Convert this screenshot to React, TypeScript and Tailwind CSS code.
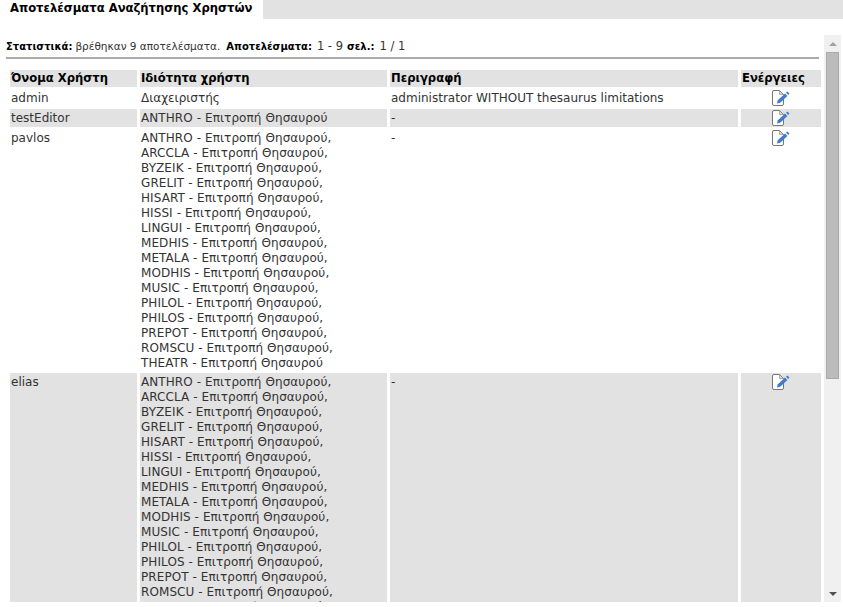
const committee = (code: string) => `${code} - Επιτροπή Θησαυρού`;

const codes = [
  "ANTHRO",
  "ARCCLA",
  "BYZEIK",
  "GRELIT",
  "HISART",
  "HISSI",
  "LINGUI",
  "MEDHIS",
  "METALA",
  "MODHIS",
  "MUSIC",
  "PHILOL",
  "PHILOS",
  "PREPOT",
  "ROMSCU",
  "THEATR",
];

const users = [
  { name: "admin", roles: ["Διαχειριστής"], description: "administrator WITHOUT thesaurus limitations" },
  { name: "testEditor", roles: [committee("ANTHRO")], description: "-" },
  { name: "pavlos", roles: codes.map(committee), description: "-" },
  { name: "elias", roles: codes.map(committee), description: "-" },
];

const EditIcon = () => (
  <svg width="18" height="16" viewBox="0 0 18 16" className="mx-auto block">
    <path
      d="M11.5 9 V14 a1.5 1.5 0 0 1-1.5 1.5 H2 a1.5 1.5 0 0 1-1.5-1.5 V2 A1.5 1.5 0 0 1 2 0.5 H7.5 L11.5 4.5 V5"
      fill="#fff"
      stroke="#777"
    />
    <path d="M7.5 1 V4.5 H11" fill="#d8d8d8" stroke="#aaa" />
    <path d="M5 13.5 L5.6 10.4 L13 3.6 L15.4 6 L8.2 12.8 Z" fill="#3f7cc9" />
    <path d="M14 2.7 L15.5 1.6 L17.4 3.5 L16.2 5 Z" fill="#3f7cc9" />
  </svg>
);

const App = () => {
  return (
    <div className="h-[607px] w-[843px] overflow-hidden bg-white font-['DejaVu_Sans',Verdana,sans-serif] text-[12px] leading-[15px] text-[#333]">
      <div className="flex h-[19px] bg-[#e2e2e2]">
        <div className="w-[263px] bg-white pl-[10px] text-[11.6px] font-bold leading-[17px] text-black">
          Αποτελέσματα Αναζήτησης Χρηστών
        </div>
      </div>

      <div className="flex h-[583px] pt-[16px]">
        <div className="w-[824px] overflow-hidden pl-[6px]">
          <div className="flex h-[19px] items-end whitespace-pre text-[10.5px] leading-[15px]">
            <b className="text-[10px] text-black">Στατιστικά:</b>
            <span className="ml-[3px]">βρέθηκαν 9 αποτελέσματα.</span>
            <b className="ml-[6px] text-[10px] text-black">Αποτελέσματα:</b>
            <span className="ml-[5px] text-[11.5px]">1 - 9</span>
            <b className="ml-[4px] text-[10px] text-black">σελ.:</b>
            <span className="ml-[5px] text-[11.5px]">1 / 1</span>
          </div>
          <div className="mt-[3px] h-[2px] w-[813px] bg-[#aaa]" />

          <table className="mt-[9px] ml-[1px] table-fixed border-separate border-spacing-x-[3px] border-spacing-y-[2px]">
            <thead>
              <tr className="text-left text-[11.6px] font-bold text-black">
                <th className="h-[17px] w-[127px] bg-[#e2e2e2] p-0 pl-[1px]">Όνομα Χρήστη</th>
                <th className="h-[17px] w-[247px] bg-[#e2e2e2] p-0 pl-[1px]">Ιδιότητα χρήστη</th>
                <th className="h-[17px] w-[348px] bg-[#e2e2e2] p-0 pl-[1px]">Περιγραφή</th>
                <th className="h-[17px] w-[80px] bg-[#e2e2e2] p-0 pl-[1px]">Ενέργειες</th>
              </tr>
            </thead>
            <tbody>
              {users.map((user, i) => {
                const cell = i % 2 === 1 ? "bg-[#e2e2e2]" : "";
                const text = `px-[1px] pt-[2px] pb-0 ${cell}`;
                return (
                  <tr key={user.name} className="align-top">
                    <td className={text}>{user.name}</td>
                    <td className={text}>
                      {user.roles.map((role, j) => (
                        <div key={j} className={i > 0 ? "tracking-[0.08px]" : ""}>
                          {role}
                          {j < user.roles.length - 1 ? "," : ""}
                        </div>
                      ))}
                    </td>
                    <td className={text}>{user.description}</td>
                    <td className={`p-[1px] ${cell}`}>
                      <EditIcon />
                    </td>
                  </tr>
                );
              })}
            </tbody>
          </table>
        </div>

        <div className="flex h-[567px] w-[17px] flex-col bg-[#f0f0f0]">
          <div className="flex h-[17px] items-center justify-center">
            <div className="h-0 w-0 border-x-[4px] border-b-[4px] border-x-transparent border-b-[#a3a3a3]" />
          </div>
          <div className="mx-auto h-[327px] w-[13px] border border-[#aaa] bg-[#bbb]" />
          <div className="mt-auto flex h-[17px] items-center justify-center">
            <div className="h-0 w-0 border-x-[4px] border-t-[4px] border-x-transparent border-t-[#505050]" />
          </div>
        </div>
      </div>
    </div>
  );
};

export default App;
